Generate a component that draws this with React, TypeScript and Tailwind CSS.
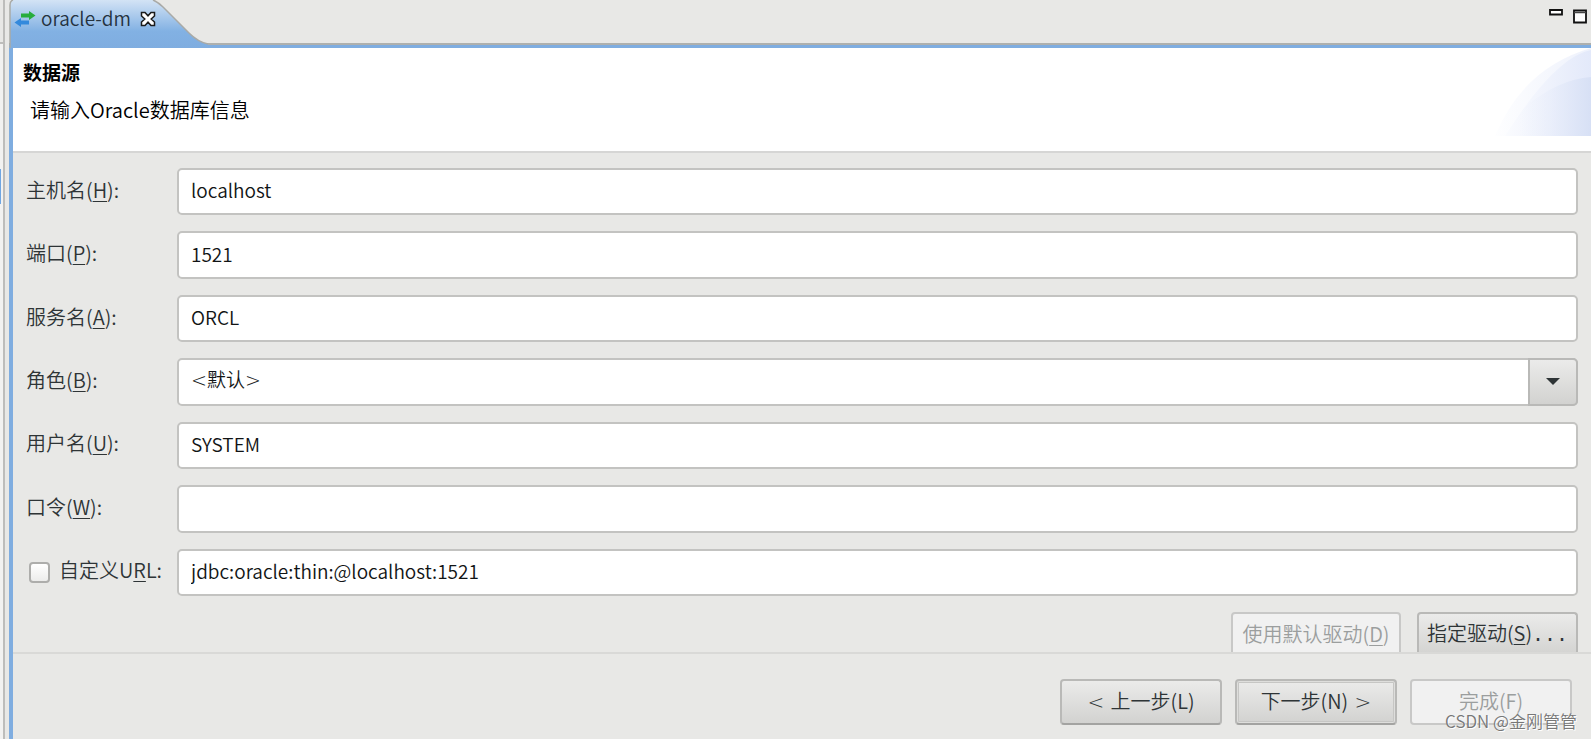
import type { ReactNode } from "react";

const inputBase =
  "h-full w-full min-w-0 rounded-[5px] border-2 border-[#c3c3c1] bg-white px-3 pb-1 text-[19px] text-[#111415] outline-none focus:border-[#7fade0]";

function Mnemonic({ text, letter, tail }: { text: string; letter: string; tail: string }) {
  return (
    <>
      {text}
      <span className="underline decoration-1 underline-offset-3">{letter}</span>
      {tail}
    </>
  );
}

function Row({ id, label, children }: { id: string; label: ReactNode; children: ReactNode }) {
  return (
    <div className="flex items-stretch">
      <label htmlFor={id} className="flex w-[151px] shrink-0 items-center pb-1">
        <span>{label}</span>
      </label>
      <div className="relative min-w-0 flex-1">{children}</div>
    </div>
  );
}

function TextRow({ id, text, letter, value }: { id: string; text: string; letter: string; value: string }) {
  return (
    <Row id={id} label={<Mnemonic text={text + "("} letter={letter} tail="):" />}>
      <input id={id} type={id === "password" ? "password" : "text"} defaultValue={value} className={inputBase} />
    </Row>
  );
}

function TabShape() {
  return (
    <svg className="absolute top-0 left-0 h-12 w-[200px]" viewBox="0 0 200 48" aria-hidden="true">
      <defs>
        <linearGradient id="tab" x1="0" y1="0" x2="0" y2="1">
          <stop offset="0" stopColor="#d3e3f5" />
          <stop offset="0.65" stopColor="#82b1e3" />
          <stop offset="1" stopColor="#7fade0" />
        </linearGradient>
      </defs>
      <path d="M1 48V5Q1 1 4 0H144Q149 2 154 7L180 33Q189 42 199 44V48Z" fill="url(#tab)" />
      <path d="M1 48V5Q1 1 4 0M144 0Q149 2 154 7L180 33Q189 42 199 44" fill="none" stroke="#a9aaa7" strokeWidth="1.5" />
    </svg>
  );
}

function SwapIcon() {
  return (
    <svg className="h-4 w-[22px]" viewBox="0 0 22 16" aria-hidden="true">
      <path d="M7 2.500h8V0l6.500 4.500-6.500 4.500V6.500H7Z" fill="#27ad3d" />
      <path d="M15 9.500H7V7L0.500 11.500 7 16V13.500h8Z" fill="#3389dc" />
    </svg>
  );
}

function Header() {
  return (
    <header className="relative flex min-h-[105px] flex-col gap-2 border-b-2 border-[#d6d6d5] bg-white pt-[10px] text-black">
      <svg className="absolute top-0 right-0 h-[88px] w-[96px]" viewBox="0 0 96 88" aria-hidden="true">
        <defs>
          <linearGradient id="arcA" gradientUnits="userSpaceOnUse" x1="-8" y1="0" x2="96" y2="0">
            <stop offset="0" stopColor="#fff" />
            <stop offset="1" stopColor="#e3e9fa" />
          </linearGradient>
          <linearGradient id="arcB" gradientUnits="userSpaceOnUse" x1="24" y1="0" x2="96" y2="0">
            <stop offset="0" stopColor="#eef2fc" stopOpacity="0" />
            <stop offset="1" stopColor="#d7e0f5" />
          </linearGradient>
        </defs>
        <path d="M0 88Q28 20 96 0V88Z" fill="url(#arcA)" opacity="0.6" />
        <path d="M10 88Q60 9 96 2V88Z" fill="url(#arcA)" />
        <path d="M0 88Q50 32 96 29V88Z" fill="url(#arcB)" />
      </svg>
      <h1 className="pl-[10px] text-[19px] leading-7 font-bold">数据源</h1>
      <p className="pl-[17px] text-[20px] leading-8">请输入Oracle数据库信息</p>
    </header>
  );
}

const buttonBase = "h-[46px] rounded-[4px] border-2 pb-0.5 text-[20px] whitespace-nowrap";
const enabled = "border-[#b9b9b7] border-b-[#a3a3a1] bg-linear-to-b from-[#ebebea] to-[#d2d2d0] text-[#2e3436]";
const disabled = "border-[#c8c8c7] bg-[#f1f1f1] text-[#9b9e9e]";

export default function App() {
  return (
    <div className="flex min-h-screen overflow-hidden bg-[#e8e8e6] font-['Noto_Sans_CJK_SC',sans-serif] text-[20px] leading-7 font-[350] text-[#2e3436]">
      <div className="flex w-[9px] shrink-0 flex-col">
        <div className="h-[44px] w-[5px] border-r-2 border-b-2 border-[#bdbdbb]" />
        <div className="h-[125px] w-[5px] border-r-2 border-[#bdbdbb] bg-[#f2f2f1]" />
        <div className="h-[35px] w-[5px] border-r-2 border-l border-r-[#bdbdbb] border-l-[#6fa6e2] bg-[#f2f2f1]" />
        <div className="w-[5px] flex-1 border-r-2 border-[#bdbdbb] bg-[#f2f2f1]" />
      </div>

      <main className="flex min-w-0 flex-1 flex-col">
        <div className="relative flex h-12 items-start justify-between border-b-[3px] border-[#7fade0]">
          <div className="absolute inset-x-0 bottom-0 h-[2px] bg-[#aeb0ae]" />
          <TabShape />
          <div className="relative flex h-[38px] items-center gap-[5px] pl-[5px]">
            <SwapIcon />
            <span className="pb-0.5 text-[19px] text-[#24323e]">oracle-dm</span>
            <button aria-label="关闭" className="ml-1">
              <svg className="size-4" viewBox="0 0 16 16" aria-hidden="true">
                <path
                  d="M1.500 1.500H5L8 4.800 11 1.500h3.500V5L11.200 8l3.300 3v3.500H11L8 11.200 5 14.500H1.500V11L4.800 8 1.500 5Z"
                  fill="#fff"
                  stroke="#1b1b1b"
                  strokeWidth="1.500"
                />
              </svg>
            </button>
          </div>
          <div className="relative flex items-start gap-[10px] pt-[9px] pr-1">
            <button aria-label="最小化">
              <svg className="h-[7px] w-[14px]" viewBox="0 0 14 7" aria-hidden="true">
                <path d="M1 1h12v4.500H1Z" fill="#fff" stroke="#111" strokeWidth="1.800" />
              </svg>
            </button>
            <button aria-label="最大化">
              <svg className="h-[15px] w-[14px]" viewBox="0 0 14 15" aria-hidden="true">
                <path d="M1 1.500h12v12H1Z" fill="#fff" stroke="#111" strokeWidth="1.800" />
                <path d="M1 3.500h12" stroke="#444" strokeWidth="1.500" />
              </svg>
            </button>
          </div>
        </div>

        <div className="flex flex-1 flex-col border-l-4 border-[#7fade0]">
          <Header />

          <form className="flex flex-1 flex-col">
            <div className="grid min-h-[443px] auto-rows-fr gap-4 pt-[15px] pr-[13px] pl-[13px]">
              <TextRow id="host" text="主机名" letter="H" value="localhost" />
              <TextRow id="port" text="端口" letter="P" value="1521" />
              <TextRow id="service" text="服务名" letter="A" value="ORCL" />
              <Row id="role" label={<Mnemonic text="角色(" letter="B" tail="):" />}>
                <select
                  id="role"
                  className={inputBase + " appearance-none font-['DejaVu_Sans','Noto_Sans_CJK_SC',sans-serif]"}
                >
                  <option>&lt;默认&gt;</option>
                </select>
                <span className="pointer-events-none absolute inset-y-0 right-0 flex w-[50px] items-center justify-center rounded-r-[5px] border-2 border-[#b9b9b7] bg-linear-to-b from-[#ebebea] to-[#d2d2d0]">
                  <svg className="h-[7px] w-[14px]" viewBox="0 0 14 7" aria-hidden="true">
                    <path d="M0 0h14L7 7Z" fill="#2e3436" />
                  </svg>
                </span>
              </Row>
              <TextRow id="user" text="用户名" letter="U" value="SYSTEM" />
              <TextRow id="password" text="口令" letter="W" value="" />
              <div className="flex items-stretch">
                <label className="flex w-[151px] shrink-0 items-center gap-[9px] pl-[3px]">
                  <input
                    type="checkbox"
                    className="size-[21px] shrink-0 appearance-none rounded-[4px] border-2 border-[#adadab] bg-linear-to-b from-white to-[#ececeb] checked:bg-[#7fade0]"
                  />
                  <span className="pb-1 whitespace-nowrap">
                    <Mnemonic text="自定义U" letter="R" tail="L:" />
                  </span>
                </label>
                <input
                  type="text"
                  aria-label="自定义URL"
                  defaultValue="jdbc:oracle:thin:@localhost:1521"
                  className={inputBase + " flex-1"}
                />
              </div>
            </div>

            <div className="flex h-[58px] items-start justify-end gap-4 overflow-hidden border-b-2 border-[#d9d9d7] pt-4 pr-[13px]">
              <button type="button" disabled className={buttonBase + " shrink-0 w-[170px] " + disabled}>
                <Mnemonic text="使用默认驱动(" letter="D" tail=")" />
              </button>
              <button type="button" className={buttonBase + " shrink-0 w-[161px] " + enabled}>
                <Mnemonic text="指定驱动(" letter="S" tail=")" />
                <span className="font-['Liberation_Mono',monospace]">...</span>
              </button>
            </div>

            <div className="relative flex flex-1 items-start justify-end gap-[13px] pt-[25px] pr-[19px]">
              <button type="button" className={buttonBase + " w-[162px] " + enabled}>
                <span className="font-['DejaVu_Sans',sans-serif]">&lt; </span>
                上一步(L)
              </button>
              <button type="button" className={buttonBase + " w-[162px] shadow-[inset_0_0_0_1px_#dededc,inset_0_0_0_2px_#c6c6c4] " + enabled}>
                下一步(N)
                <span className="font-['DejaVu_Sans',sans-serif]"> &gt;</span>
              </button>
              <button type="button" disabled className={buttonBase + " w-[162px] " + disabled}>
                完成(F)
              </button>
              <span className="absolute right-[14px] bottom-1 text-[17px] leading-7 text-[#777] [text-shadow:1px_1px_0_#fff]">
                CSDN @金刚管管
              </span>
            </div>
          </form>
        </div>
      </main>
    </div>
  );
}
